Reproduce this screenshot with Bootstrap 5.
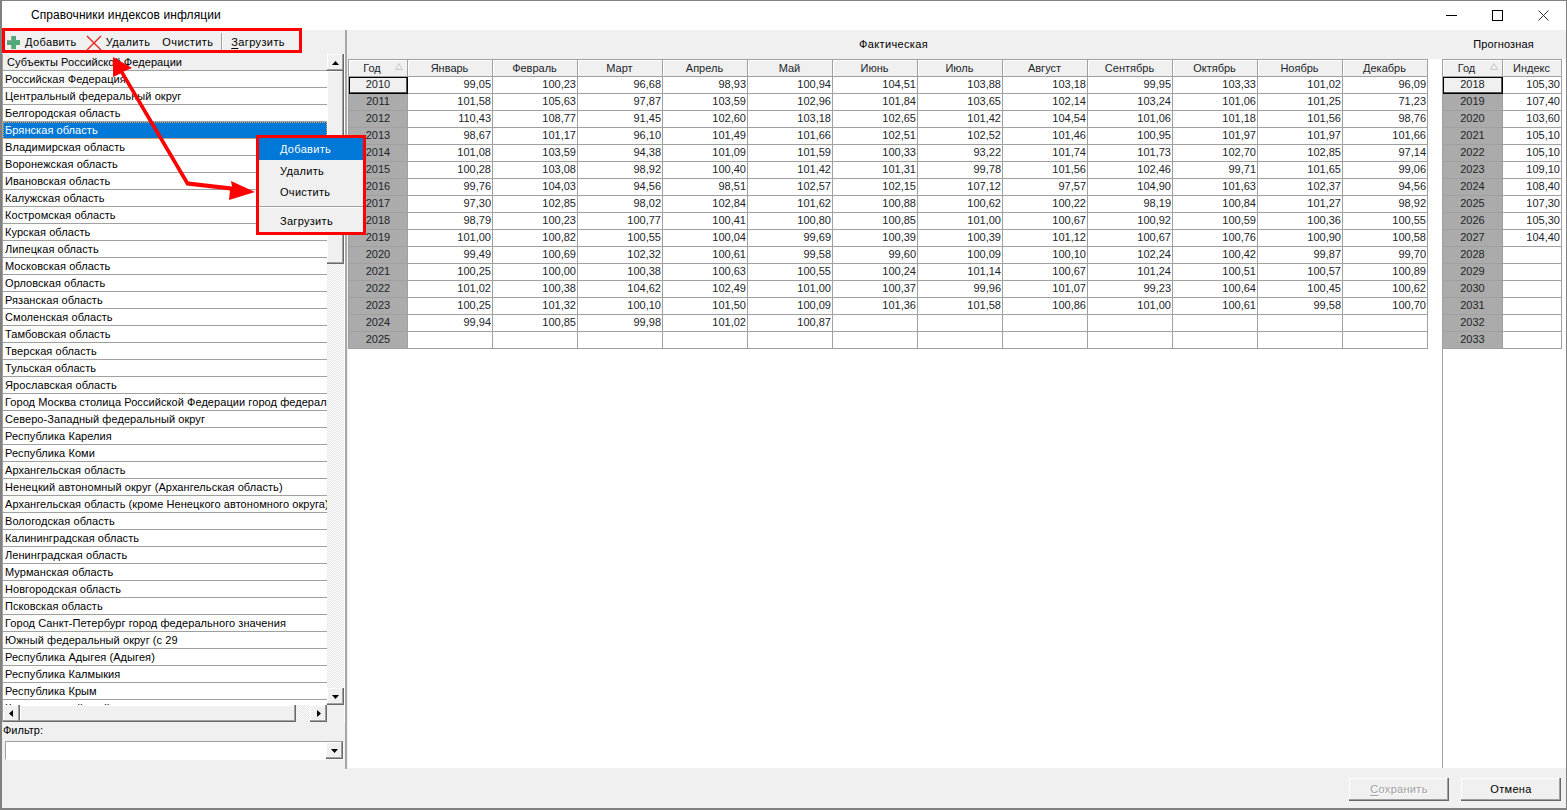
<!DOCTYPE html>
<html lang="ru"><head><meta charset="utf-8"><title>Справочники индексов инфляции</title>
<link rel="stylesheet" href="https://cdn.jsdelivr.net/npm/bootstrap@5.3.0/dist/css/bootstrap.min.css">
<style>
html,body{height:100%;margin:0;overflow:hidden}
body{font:11px/17px "Liberation Sans",Arial,sans-serif;color:#000;background:#f0f0f0}
.win{position:relative;height:810px;width:1567px;border:solid #808080;border-width:1px 1px 2px 2px;background:#f0f0f0}
.ttl{height:29px;background:#fff;padding-left:29px;font-size:12px;letter-spacing:.07px}
.wbtn{width:46px;height:29px}
.pane-l{width:343px}
.tbar{height:24px;padding:1px 0 0 5px;letter-spacing:.38px}
.tbar span{white-space:nowrap}
.tsep{width:1px;height:20px;background:#a0a0a0;box-shadow:1px 0 #fff}
.lst{height:668px;background:#fff;border-left:1px solid #a0a0a0;width:343px}
.lcol{width:324px;overflow:hidden}
.lhd{height:17px;background:#f0f0f0;padding-left:4px;border-bottom:1px solid #a0a0a0;white-space:nowrap;letter-spacing:.07px}
.rows{list-style:none;margin:0;padding:0;height:634px;overflow:hidden;letter-spacing:.07px}
.rows li{height:17px;padding-left:2px;border-bottom:1px solid #a0a0a0;white-space:nowrap;line-height:16px;overflow:hidden}
.rows li.sel{background:#0078d7;color:#fff;outline:1px dotted #e8a050;outline-offset:-1px}
.vbar{width:17px;background:repeating-conic-gradient(#fff 0 25%,#e4e4e4 0 50%) 0 0/2px 2px}
.sbb{background:#f0f0f0;box-shadow:inset -1px -1px #696969,inset -2px -2px #a0a0a0,inset 1px 1px #fff;flex:none}
.up,.dn{height:17px;width:17px}
.thb{height:193px}
.hbar{height:17px;background:#f0f0f0}
.htrack{background:repeating-conic-gradient(#fff 0 25%,#e4e4e4 0 50%) 0 0/2px 2px}
.hthb{width:276px}
.flt{padding:0 0 0 1px;height:46px}
.flbl{height:19px;line-height:17px}
.cmb{margin-left:2px;width:339px;height:19px;background:#fff;border:1px solid;border-color:#a0a0a0 #fff #fff #a0a0a0}
.cmb i{width:17px;height:17px;margin-left:auto}
.vsep{width:3px;border-left:2px solid #a8a8a8;background:#f0f0f0}
.pane-r{width:1218px}
.bands{height:29px}
.b1{width:1094px;padding:6px 3px 0 0;letter-spacing:.35px}
.b2{width:124px;padding:6px 1px 0 0;letter-spacing:.1px}
.wh{height:709px;background:#fff}
.gr1{width:1094px}
.gr2{width:124px;border-left:1px solid #a0a0a0}
table.gt{border-collapse:collapse;table-layout:fixed;margin:0;font-size:11px;line-height:15px;width:auto}
table.gt th,table.gt td{height:17px;padding:0 1px 0 0;border:1px solid #a0a0a0;font-weight:400;white-space:nowrap;overflow:hidden}
table.gt td{text-align:right;background:#fff}
table.gt thead th{background:#f0f0f0;text-align:center;box-shadow:inset 1px 1px #fff;position:relative}
table.gt thead th.yh{padding-right:12px}
table.gt tbody th{background:#ababab;text-align:center;padding:0}
table.gt tbody th.cur{background:#f0f0f0;outline:1px solid #000;outline-offset:-1px;position:relative;box-shadow:inset 0 0 0 1px #555}
table.g1{width:1079px}
table.g2{width:119px;margin-left:-1px}
.g1 col.y{width:59px}.g1 col{width:85px}
.g2 col.y{width:60px}.g2 col{width:59px}
.sorta{position:absolute;right:4px;top:3px}
.foot{height:39px;padding:9px 5px 0 0;gap:12px}
.wb{width:100px;height:23px;background:#f0f0f0;border:0;border-radius:0;padding:0;font-size:11px;line-height:21px;color:#000;letter-spacing:.3px;box-shadow:inset -1px -1px #696969,inset -2px -2px #a0a0a0,inset 1px 1px #fff,inset 0 0 0 1px #a0a0a0}
.wb:disabled,.wb.btn:disabled{background:#f0f0f0;color:#a0a0a0;opacity:1;text-shadow:1px 1px #fff}
.redbox{position:absolute;border:3px solid #f00;pointer-events:none}
.rb1{left:0;top:27px;width:300px;height:25px}
.cmenu{position:absolute;left:254px;top:134px;width:110px;height:100px;border:3px solid #f00;background:#f0f0f0;font-size:11px;letter-spacing:.3px}
.cmenu div{height:21px;line-height:22px;padding-left:21px}
.cmenu .on{background:#0078d7;color:#fff;height:22px;line-height:22px}
.cmenu hr{margin:4px 0 2px;border:0;border-top:1px solid #a0a0a0;border-bottom:1px solid #fff;opacity:1}
.anno{position:absolute;left:-2px;top:-1px;pointer-events:none}
u{text-underline-offset:2px}
</style></head><body>
<div class="win d-flex flex-column">
<div class="ttl d-flex align-items-center justify-content-between flex-none">
<span>Справочники индексов инфляции</span>
<div class="d-flex pe-0">
<div class="wbtn d-flex align-items-center justify-content-center"><svg width="11" height="11"><path d="M0 5.500H11" stroke="#000"/></svg></div>
<div class="wbtn d-flex align-items-center justify-content-center"><svg width="11" height="11"><rect x=".5" y=".5" width="10" height="10" fill="none" stroke="#000"/></svg></div>
<div class="wbtn d-flex align-items-center justify-content-center"><svg width="11" height="11"><path d="M.5 .5L10.500 10.500M10.500 .5L.5 10.500" stroke="#333"/></svg></div>
</div></div>
<div class="d-flex flex-grow-1">
<div class="pane-l d-flex flex-column">
<div class="tbar d-flex align-items-center">
<svg width="13" height="13"><path d="M4 0h5v4h4v5H9v4H4V9H0V4h4z" fill="#52a878"/><path d="M0 4h4V0h1v5H0zM4 9h1v4H4z" fill="#9aa39e"/></svg>
<span style="margin-left:5px">Добавить</span>
<svg width="16" height="16" style="margin-left:9px"><path d="M1 1l14 14M15 1L1 15" stroke="#e8231b" stroke-width="1.4"/></svg>
<span style="margin-left:4px">Удалить</span>
<span style="margin-left:12px">Очистить</span>
<i class="tsep" style="margin:0 9px 0 8px"></i>
<span><u>З</u>агрузить</span>
</div>
<div class="lst d-flex">
<div class="lcol">
<div class="lhd">Субъекты Российской Федерации</div>
<ul class="rows">
<li>Российская Федерация</li><li>Центральный федеральный округ</li><li>Белгородская область</li><li class="sel">Брянская область</li><li>Владимирская область</li><li>Воронежская область</li><li>Ивановская область</li><li>Калужская область</li><li>Костромская область</li><li>Курская область</li><li>Липецкая область</li><li>Московская область</li><li>Орловская область</li><li>Рязанская область</li><li>Смоленская область</li><li>Тамбовская область</li><li>Тверская область</li><li>Тульская область</li><li>Ярославская область</li><li>Город Москва столица Российской Федерации город федерального значения</li><li>Северо-Западный федеральный округ</li><li>Республика Карелия</li><li>Республика Коми</li><li>Архангельская область</li><li>Ненецкий автономный округ (Архангельская область)</li><li>Архангельская область (кроме Ненецкого автономного округа)</li><li>Вологодская область</li><li>Калининградская область</li><li>Ленинградская область</li><li>Мурманская область</li><li>Новгородская область</li><li>Псковская область</li><li>Город Санкт-Петербург город федерального значения</li><li>Южный федеральный округ (с 29</li><li>Республика Адыгея (Адыгея)</li><li>Республика Калмыкия</li><li>Республика Крым</li><li>Краснодарский край</li>
</ul>
<div class="hbar d-flex">
<div class="sbb up d-flex align-items-center justify-content-center"><svg width="5" height="7"><path d="M4 0v7L0 3.500z"/></svg></div>
<div class="sbb hthb"></div>
<div class="flex-grow-1 htrack"></div>
<div class="sbb up d-flex align-items-center justify-content-center"><svg width="5" height="7"><path d="M1 0v7l4-3.500z"/></svg></div>
</div>
</div>
<div class="d-flex flex-column" style="width:17px">
<div class="vbar d-flex flex-column" style="height:651px">
<div class="sbb up d-flex align-items-center justify-content-center"><svg width="7" height="4"><path d="M3.500 0L7 4H0z"/></svg></div>
<div class="sbb thb"></div>
<div class="flex-grow-1"></div>
<div class="sbb dn d-flex align-items-center justify-content-center"><svg width="7" height="4"><path d="M0 0h7L3.500 4z"/></svg></div>
</div>
<div class="flex-grow-1" style="background:#f0f0f0"></div>
</div>
</div>
<div class="flt">
<div class="flbl">Фильтр:</div>
<div class="cmb d-flex"><i class="sbb d-flex align-items-center justify-content-center"><svg width="7" height="4"><path d="M0 0h7L3.500 4z"/></svg></i></div>
</div>
</div>
<div class="vsep"></div>
<div class="pane-r d-flex flex-column">
<div class="bands d-flex text-center"><div class="b1">Фактическая</div><div class="b2">Прогнозная</div></div>
<div class="wh d-flex">
<div class="gr1">
<table class="gt g1 table"><colgroup><col class="y"><col><col><col><col><col><col><col><col><col><col><col><col></colgroup>
<thead><tr><th class="yh">Год<svg class="sorta" width="8" height="7"><path d="M4 .5L7.500 6.500H.5z" fill="none" stroke="#c8c8c8"/></svg></th><th>Январь</th><th>Февраль</th><th>Март</th><th>Апрель</th><th>Май</th><th>Июнь</th><th>Июль</th><th>Август</th><th>Сентябрь</th><th>Октябрь</th><th>Ноябрь</th><th>Декабрь</th></tr></thead>
<tbody>
<tr><th class="cur">2010</th><td>99,05<td>100,23<td>96,68<td>98,93<td>100,94<td>104,51<td>103,88<td>103,18<td>99,95<td>103,33<td>101,02<td>96,09</tr>
<tr><th>2011</th><td>101,58<td>105,63<td>97,87<td>103,59<td>102,96<td>101,84<td>103,65<td>102,14<td>103,24<td>101,06<td>101,25<td>71,23</tr>
<tr><th>2012</th><td>110,43<td>108,77<td>91,45<td>102,60<td>103,18<td>102,65<td>101,42<td>104,54<td>101,06<td>101,18<td>101,56<td>98,76</tr>
<tr><th>2013</th><td>98,67<td>101,17<td>96,10<td>101,49<td>101,66<td>102,51<td>102,52<td>101,46<td>100,95<td>101,97<td>101,97<td>101,66</tr>
<tr><th>2014</th><td>101,08<td>103,59<td>94,38<td>101,09<td>101,59<td>100,33<td>93,22<td>101,74<td>101,73<td>102,70<td>102,85<td>97,14</tr>
<tr><th>2015</th><td>100,28<td>103,08<td>98,92<td>100,40<td>101,42<td>101,31<td>99,78<td>101,56<td>102,46<td>99,71<td>101,65<td>99,06</tr>
<tr><th>2016</th><td>99,76<td>104,03<td>94,56<td>98,51<td>102,57<td>102,15<td>107,12<td>97,57<td>104,90<td>101,63<td>102,37<td>94,56</tr>
<tr><th>2017</th><td>97,30<td>102,85<td>98,02<td>102,84<td>101,62<td>100,88<td>100,62<td>100,22<td>98,19<td>100,84<td>101,27<td>98,92</tr>
<tr><th>2018</th><td>98,79<td>100,23<td>100,77<td>100,41<td>100,80<td>100,85<td>101,00<td>100,67<td>100,92<td>100,59<td>100,36<td>100,55</tr>
<tr><th>2019</th><td>101,00<td>100,82<td>100,55<td>100,04<td>99,69<td>100,39<td>100,39<td>101,12<td>100,67<td>100,76<td>100,90<td>100,58</tr>
<tr><th>2020</th><td>99,49<td>100,69<td>102,32<td>100,61<td>99,58<td>99,60<td>100,09<td>100,10<td>102,24<td>100,42<td>99,87<td>99,70</tr>
<tr><th>2021</th><td>100,25<td>100,00<td>100,38<td>100,63<td>100,55<td>100,24<td>101,14<td>100,67<td>101,24<td>100,51<td>100,57<td>100,89</tr>
<tr><th>2022</th><td>101,02<td>100,38<td>104,62<td>102,49<td>101,00<td>100,37<td>99,96<td>101,07<td>99,23<td>100,64<td>100,45<td>100,62</tr>
<tr><th>2023</th><td>100,25<td>101,32<td>100,10<td>101,50<td>100,09<td>101,36<td>101,58<td>100,86<td>101,00<td>100,61<td>99,58<td>100,70</tr>
<tr><th>2024</th><td>99,94<td>100,85<td>99,98<td>101,02<td>100,87<td><td><td><td><td><td><td></tr>
<tr><th>2025</th><td><td><td><td><td><td><td><td><td><td><td><td></tr>
</tbody></table>
</div>
<div class="gr2">
<table class="gt g2 table"><colgroup><col class="y"><col></colgroup>
<thead><tr><th class="yh">Год<svg class="sorta" width="8" height="7"><path d="M4 .5L7.500 6.500H.5z" fill="none" stroke="#c8c8c8"/></svg></th><th>Индекс</th></tr></thead>
<tbody>
<tr><th class="cur">2018</th><td>105,30</tr><tr><th>2019</th><td>107,40</tr><tr><th>2020</th><td>103,60</tr><tr><th>2021</th><td>105,10</tr><tr><th>2022</th><td>105,10</tr><tr><th>2023</th><td>109,10</tr><tr><th>2024</th><td>108,40</tr><tr><th>2025</th><td>107,30</tr><tr><th>2026</th><td>105,30</tr><tr><th>2027</th><td>104,40</tr><tr><th>2028</th><td></tr><tr><th>2029</th><td></tr><tr><th>2030</th><td></tr><tr><th>2031</th><td></tr><tr><th>2032</th><td></tr><tr><th>2033</th><td></tr>
</tbody></table>
</div>
</div>
</div>
</div>
<div class="foot d-flex justify-content-end">
<button class="btn wb" disabled><u>С</u>охранить</button>
<button class="btn wb">Отмена</button>
</div>
<div class="redbox rb1"></div>
<div class="cmenu">
<div class="on">Добавить</div><div>Удалить</div><div>Очистить</div><hr><div>Загрузить</div>
</div>
<svg class="anno" width="1567" height="810"><g fill="#f00"><path d="M113 57L132 68L123.500 71.500L188.500 181.500L232 186.500L231 181L255 192L229 200L230 190.500L186.500 185.500L120.500 73.500L113 77z"/></g></svg>
</div>
</body></html>
